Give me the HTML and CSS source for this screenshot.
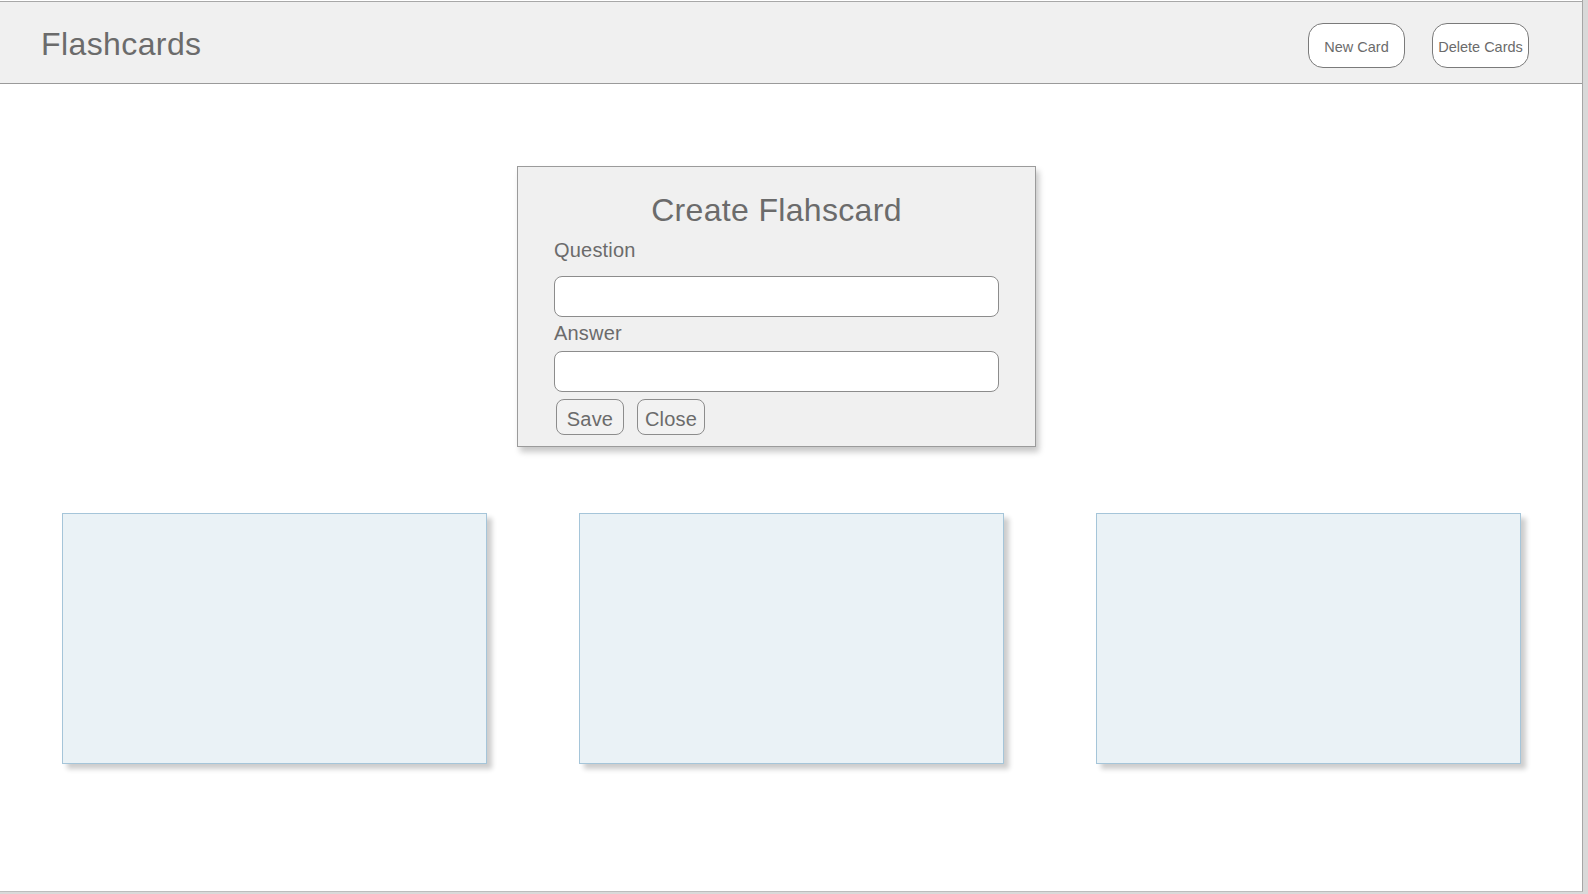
FILE: index.html
```html
<!DOCTYPE html>
<html lang="en">
<head>
<meta charset="utf-8">
<title>Flashcards</title>
<link rel="stylesheet" href="styles.css">
</head>
<body>
<div class="frame">
  <header class="topbar">
    <h1 class="brand">Flashcards</h1>
    <div class="actions">
      <button class="hbtn">New Card</button>
      <button class="hbtn">Delete Cards</button>
    </div>
  </header>
  <main class="content">
    <section class="dialog">
      <h2 class="dialog-title">Create Flahscard</h2>
      <label class="label label-q">Question</label>
      <div class="input input-q"></div>
      <label class="label label-a">Answer</label>
      <div class="input input-a"></div>
      <div class="dialog-actions">
        <button class="dbtn">Save</button>
        <button class="dbtn">Close</button>
      </div>
    </section>
    <div class="cards">
      <div class="card"></div>
      <div class="card"></div>
      <div class="card"></div>
    </div>
  </main>
</div>
</body>
</html>
```
FILE: styles.css
```css
html, body {
  margin: 0;
  padding: 0;
}
body {
  background: #d9d9d9;
  width: 1588px;
  height: 894px;
  overflow: hidden;
  font-family: "Liberation Sans", Arial, sans-serif;
  color: #6b6b6b;
}
.frame {
  box-sizing: border-box;
  width: 1583px;
  height: 892px;
  background: #ffffff;
  border-right: 1px solid #a6a6a6;
  border-bottom: 1px solid #bdbdbd;
  padding-top: 1px;
}
.topbar {
  box-sizing: border-box;
  height: 83px;
  background: #f0f0f0;
  border-top: 1px solid #a8a8a8;
  border-bottom: 1px solid #9a9a9a;
  display: flex;
  justify-content: space-between;
  align-items: flex-start;
  padding: 0 53px 0 41px;
}
.brand {
  margin: 24px 0 0 0;
  font-size: 32px;
  line-height: 36px;
  letter-spacing: 0.4px;
  font-weight: normal;
  color: #6b6b6b;
}
.actions {
  display: flex;
  gap: 27px;
  margin-top: 21px;
}
.hbtn {
  box-sizing: border-box;
  width: 97px;
  height: 45px;
  padding: 2px 0 0 0;
  background: #ffffff;
  border: 1px solid #7a7a7a;
  border-radius: 15px;
  font-family: "Liberation Sans", Arial, sans-serif;
  font-size: 14.5px;
  color: #6b6b6b;
}
.content {
  padding-top: 82px;
}
.dialog {
  box-sizing: border-box;
  width: 519px;
  height: 281px;
  margin-left: 517px;
  background: #f0f0f0;
  border: 1px solid #9b9b9b;
  box-shadow: 3px 5px 6px rgba(0, 0, 0, 0.22);
  padding: 24px 36px 0 36px;
  display: flex;
  flex-direction: column;
  align-items: flex-start;
}
.dialog-title {
  align-self: stretch;
  text-align: center;
  margin: 0;
  font-size: 32px;
  line-height: 38px;
  letter-spacing: 0.33px;
  font-weight: normal;
  color: #6b6b6b;
}
.label {
  display: block;
  font-size: 20px;
  line-height: 24px;
  letter-spacing: 0.2px;
  color: #6b6b6b;
}
.label-q { margin-top: 9px; }
.label-a { margin-top: 4px; }
.input {
  box-sizing: border-box;
  width: 445px;
  height: 41px;
  background: #ffffff;
  border: 1px solid #8c8c8c;
  border-radius: 8px;
}
.input-q { margin-top: 14px; }
.input-a { margin-top: 6px; }
.dialog-actions {
  display: flex;
  gap: 13px;
  margin-top: 7px;
  margin-left: 2px;
}
.dbtn {
  box-sizing: border-box;
  width: 68px;
  height: 36px;
  padding: 5px 0 0 0;
  background: #f2f2f2;
  border: 1px solid #8c8c8c;
  border-radius: 8px;
  font-family: "Liberation Sans", Arial, sans-serif;
  font-size: 20px;
  letter-spacing: 0.2px;
  color: #6b6b6b;
}
.cards {
  display: flex;
  gap: 92px;
  padding-left: 62px;
  margin-top: 66px;
}
.card {
  box-sizing: border-box;
  width: 425px;
  height: 251px;
  background: #eaf2f6;
  border: 1px solid #a5c5d9;
  box-shadow: 5px 5px 5px rgba(0, 0, 0, 0.2);
}
```
